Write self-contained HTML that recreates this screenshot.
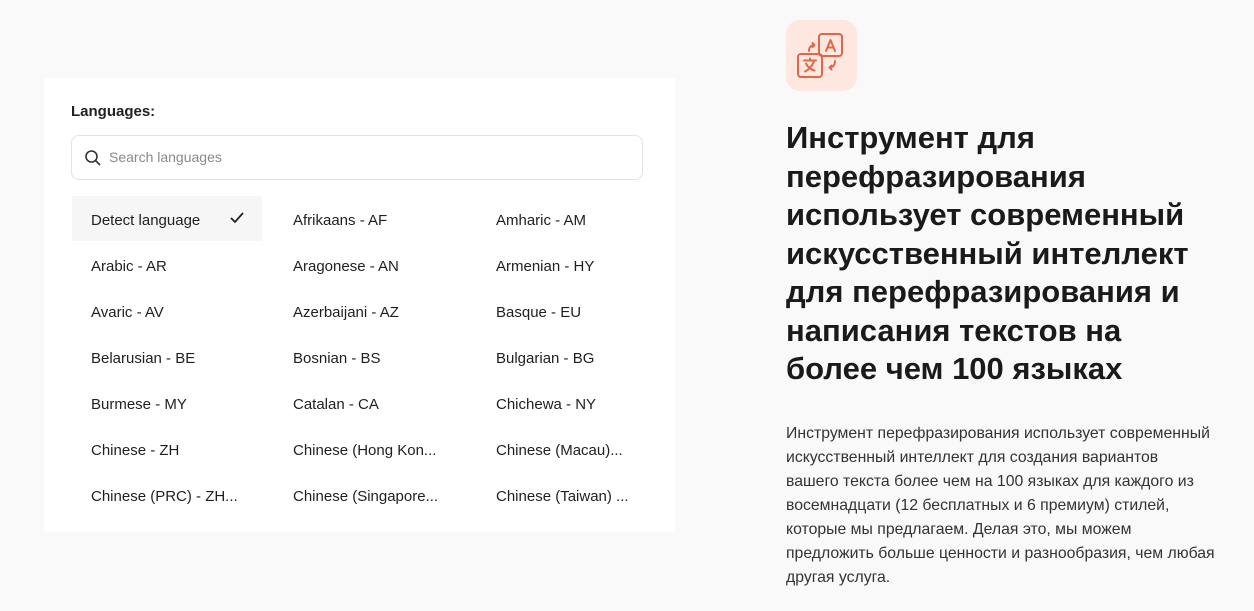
<!DOCTYPE html>
<html><head><meta charset="utf-8"><style>
body{margin:0;background:#f9f9f9;width:1254px;height:611px;overflow:hidden;font-family:"Liberation Sans",sans-serif;position:relative;color:#1f1f1f}
.card{position:absolute;left:44px;top:78px;width:631px;height:454px;background:#fff}
.lbl{position:absolute;left:27px;top:25px;font-size:15px;font-weight:bold;color:#222}
.search{position:absolute;left:27px;top:57px;width:570px;height:43px;border:1px solid #e3e3e3;border-radius:8px}
.search span{position:absolute;left:37px;top:13px;font-size:14px;color:#8a8a8a}
.search svg{position:absolute;left:12px;top:13px}
.it{position:absolute;font-size:15px;color:#1f1f1f;line-height:20px;margin-top:2px}
.hl{position:absolute;left:28px;top:118px;width:190px;height:45px;background:#f6f6f6}
.icon{position:absolute;left:786px;top:20px;width:71px;height:71px;background:#fde7df;border-radius:14px}
h1{position:absolute;left:786px;top:119px;margin:0;font-size:31px;line-height:38.5px;font-weight:bold;color:#1a1a1a;white-space:nowrap}
p{position:absolute;left:786px;top:422px;margin:0;text-align:left;font-size:15.8px;line-height:24px;color:#333;white-space:nowrap}
</style></head><body>
<div class="card">
<div class="lbl">Languages:</div>
<div class="search"><svg width="18" height="18" viewBox="0 0 18 18" fill="none" stroke="#333" stroke-width="1.6"><circle cx="7.5" cy="7.5" r="5.5"/><path d="M11.5 11.5L16 16"/></svg><span>Search languages</span></div>
<div class="hl"></div>
<svg style="position:absolute;left:185px;top:133px" width="16" height="14" viewBox="0 0 16 14" fill="none" stroke="#222" stroke-width="1.8"><path d="M2 7l4 4 8-9"/></svg>
<div class="it" style="left:47px;top:131px">Detect language</div>
<div class="it" style="left:249px;top:131px">Afrikaans - AF</div>
<div class="it" style="left:452px;top:131px">Amharic - AM</div>
<div class="it" style="left:47px;top:177px">Arabic - AR</div>
<div class="it" style="left:249px;top:177px">Aragonese - AN</div>
<div class="it" style="left:452px;top:177px">Armenian - HY</div>
<div class="it" style="left:47px;top:223px">Avaric - AV</div>
<div class="it" style="left:249px;top:223px">Azerbaijani - AZ</div>
<div class="it" style="left:452px;top:223px">Basque - EU</div>
<div class="it" style="left:47px;top:269px">Belarusian - BE</div>
<div class="it" style="left:249px;top:269px">Bosnian - BS</div>
<div class="it" style="left:452px;top:269px">Bulgarian - BG</div>
<div class="it" style="left:47px;top:315px">Burmese - MY</div>
<div class="it" style="left:249px;top:315px">Catalan - CA</div>
<div class="it" style="left:452px;top:315px">Chichewa - NY</div>
<div class="it" style="left:47px;top:361px">Chinese - ZH</div>
<div class="it" style="left:249px;top:361px">Chinese (Hong Kon...</div>
<div class="it" style="left:452px;top:361px">Chinese (Macau)...</div>
<div class="it" style="left:47px;top:407px">Chinese (PRC) - ZH...</div>
<div class="it" style="left:249px;top:407px">Chinese (Singapore...</div>
<div class="it" style="left:452px;top:407px">Chinese (Taiwan) ...</div>
</div>
<div class="icon"><svg width="71" height="71" viewBox="0 0 71 71" fill="none" stroke="#e2664a" stroke-width="2" stroke-linecap="round" stroke-linejoin="round">
<rect x="33" y="14" width="23" height="22" rx="3"/><path d="M40 31l4.5-11 4.5 11M41.5 27.5h6"/>
<rect x="12" y="34" width="24" height="23" rx="3"/><path d="M18 40.5h12M24 38.5v2M28 40.5c-1 5-5 9-9 11M20 43.5c2 4 5 6 8.5 7"/>
<path d="M23 31c0-3.5 2-6 5.5-6M26.5 23l2 2-2 2"/><path d="M49 41c0 4-2 6.5-5.5 6.5M45.5 45.5l-2 2 2 2"/></svg></div>
<h1>Инструмент для<br>перефразирования<br>использует современный<br>искусственный интеллект<br>для перефразирования и<br>написания текстов на<br>более чем 100 языках</h1>
<p>Инструмент перефразирования использует современный<br>искусственный интеллект для создания вариантов<br>вашего текста более чем на 100 языках для каждого из<br>восемнадцати (12 бесплатных и 6 премиум) стилей,<br>которые мы предлагаем. Делая это, мы можем<br>предложить больше ценности и разнообразия, чем любая<br>другая услуга.</p>
</body></html>
